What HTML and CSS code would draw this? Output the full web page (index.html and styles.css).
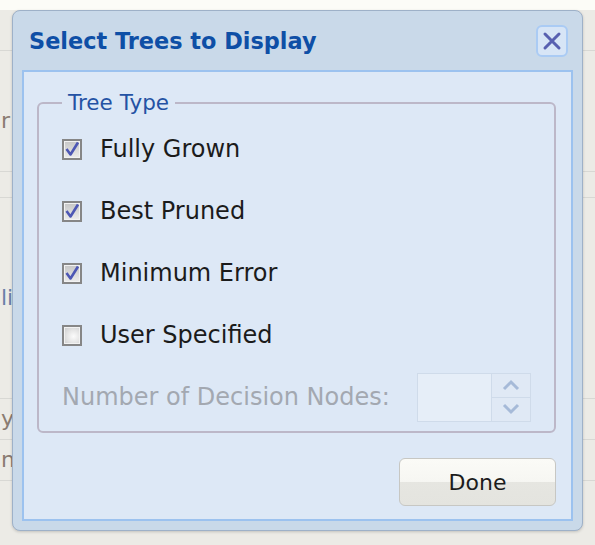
FILE: index.html
```html
<!DOCTYPE html>
<html>
  <head>
    <title>Select Trees to Display</title>
    <link rel="stylesheet" href="styles.css">
  </head>
  <body>
    <div class="backdrop">
      <div class="cell">&nbsp;</div>
      <div class="cell tall"><span class="peek">r</span></div>
      <div class="cell short">&nbsp;</div>
      <div class="cell tall2"><span class="peek blue">li</span></div>
      <div class="cell short2"><span class="peek">y</span></div>
      <div class="cell"><span class="peek">n</span></div>
    </div>

    <div class="dialog">
      <div class="titlebar">
        <h1 class="title">Select Trees to Display</h1>
        <button class="close" type="button" title="Close">
          <svg width="20" height="20" viewBox="0 0 20 20">
            <path d="M3 3 L17 17 M17 3 L3 17" stroke="#5860b0" stroke-width="3" stroke-linecap="round" fill="none"/>
          </svg>
        </button>
      </div>

      <div class="panel">
        <fieldset class="group">
          <legend>Tree Type</legend>

          <label class="row">
            <span class="box">
              <svg width="16" height="16" viewBox="0 0 16 16"><path d="M2.5 8 L6.5 13.5 L14 1.5" stroke="#4d57b4" stroke-width="2.6" fill="none" stroke-linejoin="round"/></svg>
            </span>
            Fully Grown
          </label>
          <label class="row">
            <span class="box">
              <svg width="16" height="16" viewBox="0 0 16 16"><path d="M2.5 8 L6.5 13.5 L14 1.5" stroke="#4d57b4" stroke-width="2.6" fill="none" stroke-linejoin="round"/></svg>
            </span>
            Best Pruned
          </label>
          <label class="row">
            <span class="box">
              <svg width="16" height="16" viewBox="0 0 16 16"><path d="M2.5 8 L6.5 13.5 L14 1.5" stroke="#4d57b4" stroke-width="2.6" fill="none" stroke-linejoin="round"/></svg>
            </span>
            Minimum Error
          </label>
          <label class="row">
            <span class="box empty"></span>
            User Specified
          </label>

          <div class="row nodes">
            <span class="muted">Number of Decision Nodes:</span>
            <div class="spinner">
              <div class="spin-field"></div>
              <div class="spin-buttons">
                <div class="spin-btn">
                  <svg width="20" height="12" viewBox="0 0 20 12"><path d="M3 10 L10 3 L17 10" stroke="#a6bad8" stroke-width="3" fill="none"/></svg>
                </div>
                <div class="spin-btn">
                  <svg width="20" height="12" viewBox="0 0 20 12"><path d="M3 2 L10 9 L17 2" stroke="#a6bad8" stroke-width="3" fill="none"/></svg>
                </div>
              </div>
            </div>
          </div>
        </fieldset>

        <div class="actions">
          <button class="done" type="button">Done</button>
        </div>
      </div>
    </div>
  </body>
</html>
```

FILE: styles.css
```css
/* page behind the dialog */
body {
  margin: 0;
  font-family: "DejaVu Sans", Verdana, sans-serif;
  background: linear-gradient(#fcfcf7 0, #fcfcf7 10px, #ecebe6 10px);
  height: 545px;
  overflow: hidden;
  position: relative;
}

.backdrop {
  padding-top: 10px;
}

.cell {
  height: 40px;
  border-bottom: 1px solid #d8d8d4;
  font-size: 22px;
  color: #8a7c72;
  line-height: 40px;
}

.cell.tall {
  height: 120px;
  line-height: 140px;
}

.cell.short {
  height: 25px;
}

.cell.tall2 {
  height: 200px;
  line-height: 200px;
}

.cell.short2 {
  height: 40px;
}

.peek {
  padding-left: 1px;
}

.peek.blue {
  color: #6a7fa8;
}

/* dialog */
.dialog {
  position: absolute;
  left: 12px;
  top: 10px;
  width: 571px;
  height: 521px;
  box-sizing: border-box;
  padding: 0 9px 9px;
  border: 1px solid #9eb1c8;
  border-radius: 8px;
  background-color: #c9d9e9;
  box-shadow: 0 1px 3px rgba(0, 0, 0, 0.18);
}

.titlebar {
  height: 59px;
  display: flex;
  align-items: center;
  justify-content: space-between;
  padding-left: 7px;
  padding-right: 5px;
}

.title {
  margin: 0;
  font-size: 22.4px;
  font-weight: bold;
  color: #0e4fa6;
}

.close {
  width: 32px;
  height: 32px;
  padding: 0;
  display: flex;
  align-items: center;
  justify-content: center;
  border: 2px solid #aacbf4;
  border-radius: 6px;
  background-color: #d7e5f6;
  cursor: pointer;
}

.panel {
  height: 451px;
  box-sizing: border-box;
  border: 2px solid #9cc2ef;
  background-color: #dde8f6;
  padding: 18px 15px 0 13px;
}

.group {
  margin: 0;
  padding: 2px 23px 3px 23px;
  border: 2px solid #bcb7c8;
  border-radius: 6px;
}

.group legend {
  margin-left: 0;
  padding: 0 6px;
  font-size: 21.5px;
  line-height: 26px;
  color: #2452a4;
}

.row {
  height: 62px;
  display: flex;
  align-items: center;
  font-size: 24px;
  color: #1b1b1b;
  cursor: pointer;
}

.box {
  width: 20px;
  height: 21px;
  box-sizing: border-box;
  margin-right: 18px;
  display: flex;
  align-items: center;
  justify-content: center;
  border: 2px solid #868686;
  background: linear-gradient(#c6c6c6, #ececec);
  box-shadow: inset 0 0 0 1px #f2f2f2;
}

.box.empty {
  background: radial-gradient(circle at 60% 55%, #fbfbfb 0, #e6e6e6 45%, #c9c9c9 100%);
}

.nodes {
  justify-content: space-between;
  cursor: default;
}

.muted {
  color: #a3a8b1;
}

.spinner {
  width: 114px;
  height: 49px;
  box-sizing: border-box;
  display: flex;
  border: 1px solid #cfdbea;
}

.spin-field {
  flex: 1;
  background-color: #e6eef8;
  border-right: 1px solid #cfdbea;
}

.spin-buttons {
  width: 38px;
  display: flex;
  flex-direction: column;
}

.spin-btn {
  flex: 1;
  display: flex;
  align-items: center;
  justify-content: center;
  background-color: #e0e9f5;
}

.spin-btn + .spin-btn {
  border-top: 1px solid #cfdbea;
}

.actions {
  display: flex;
  justify-content: flex-end;
  margin-top: 25px;
}

.done {
  width: 157px;
  height: 48px;
  border: 1px solid #c7c7c3;
  border-radius: 6px;
  background: linear-gradient(#fbfbf7 0, #f6f6f2 50%, #e6e6e1 50%, #e4e4df 100%);
  font-family: "DejaVu Sans", Verdana, sans-serif;
  font-size: 22px;
  color: #1c1c1c;
  cursor: pointer;
}
```
